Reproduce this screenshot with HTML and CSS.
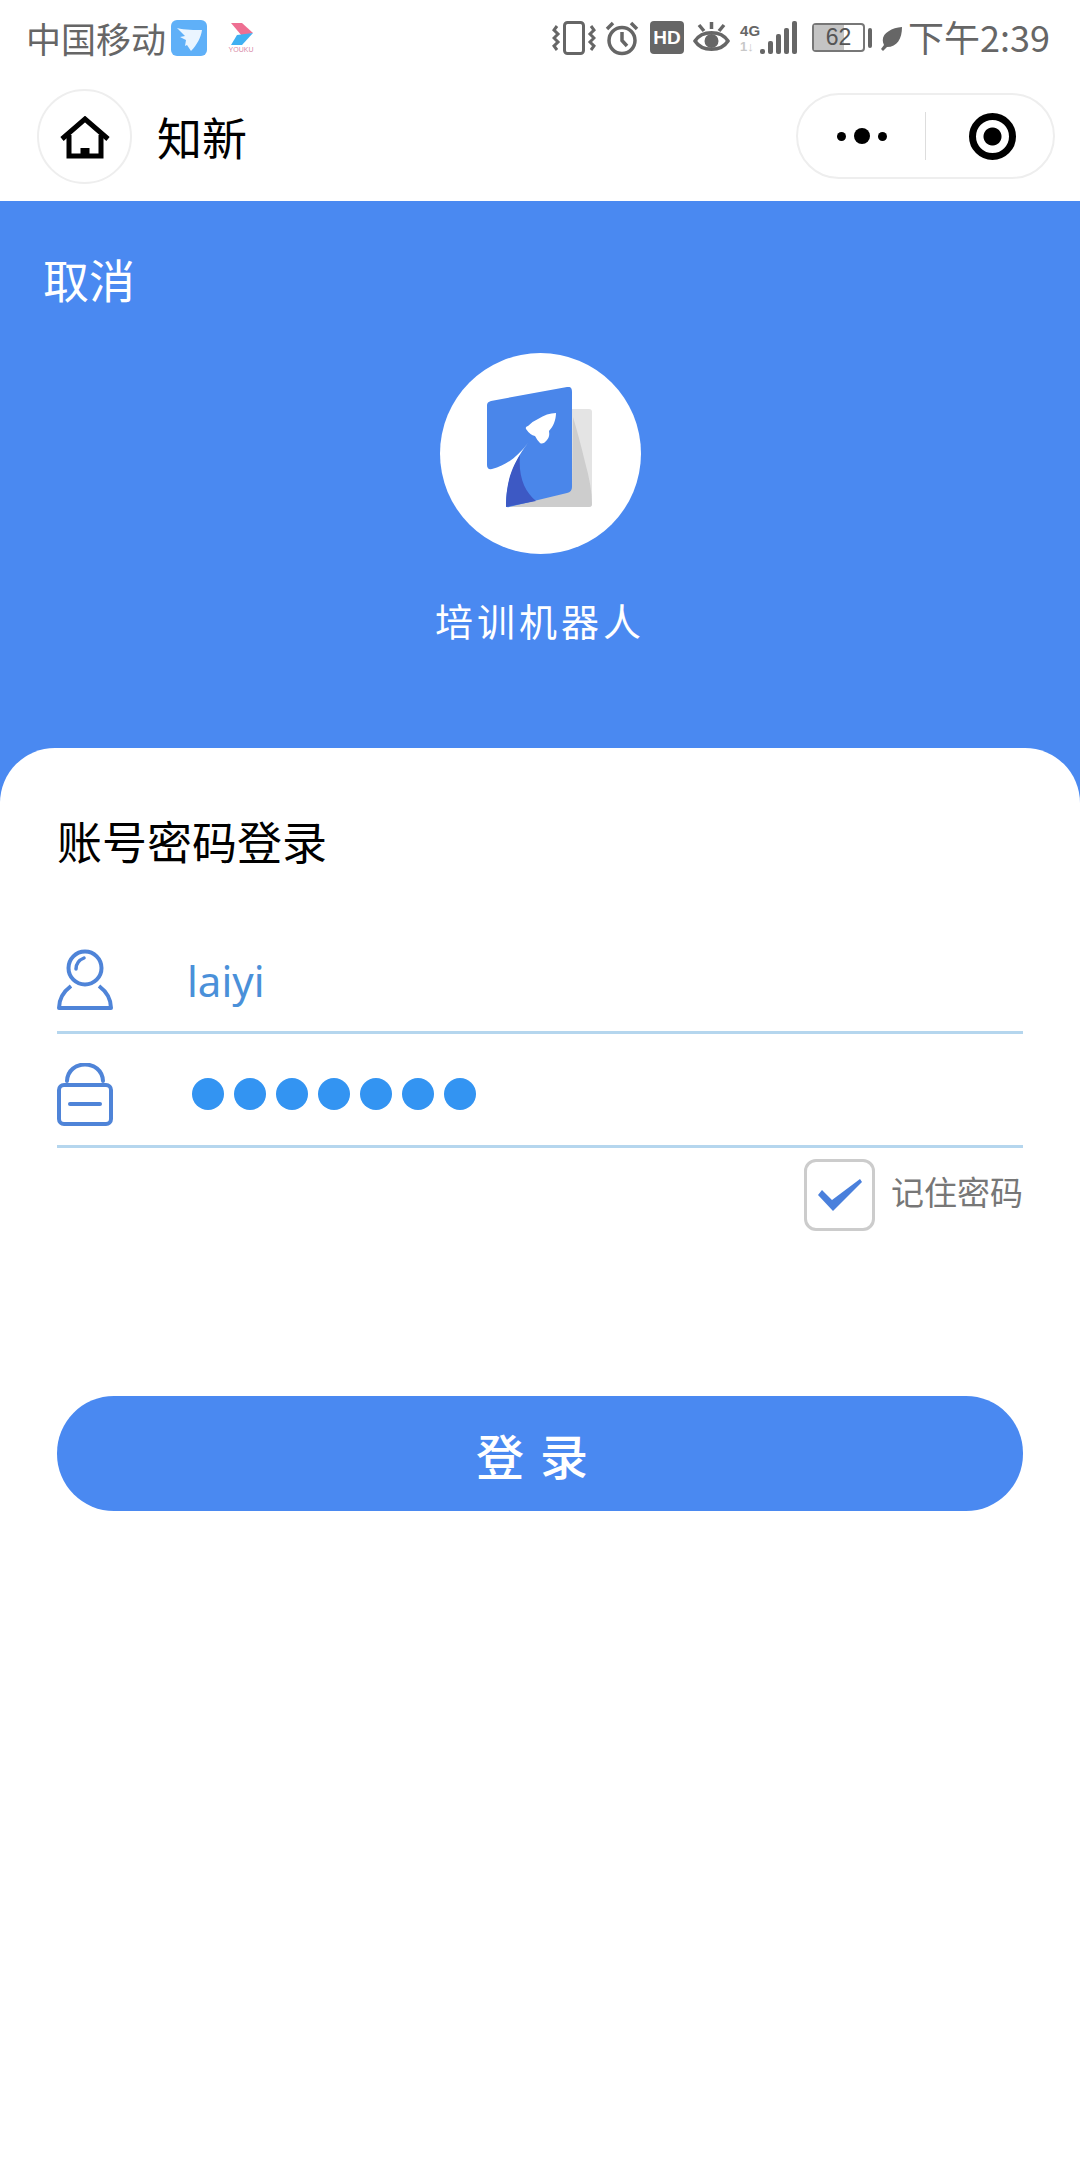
FILE: index.html
```html
<!DOCTYPE html>
<html lang="zh-CN">
<head>
    <meta charset="UTF-8">
    <meta name="viewport" content="width=device-width, initial-scale=1.0">
    <title>知新</title>
    <link rel="stylesheet" href="styles.css">
</head>
<body>
    <!-- Status Bar -->
    <div class="status-bar">
        <div class="status-left">
            <span class="carrier">中国移动</span>
            <svg class="app-icon" width="36" height="36" viewBox="0 0 36 36">
                <rect width="36" height="36" rx="6" fill="#5fb0f8"/>
                <path d="M6 8 C14 10 24 10 31 10 C30 17 26 25 20 31 L16 25 L14 26 L15 20 L9 17 L14 16 Z" fill="#eaf5ff"/>
            </svg>
            <span class="video-app">
                <svg width="26" height="24" viewBox="0 0 26 24">
                    <path d="M3 1 L14 1 L25 11 L14 14 Z" fill="#ee6f92"/>
                    <path d="M25 11 L14 23 L3 23 L9 13 Z" fill="#3fb0f2"/>
                </svg>
                <span class="video-name">YOUKU</span>
            </span>
        </div>
        <div class="status-right">
            <svg class="ico-vibrate" width="44" height="34" viewBox="0 0 44 34" fill="none" stroke="#666">
                <rect x="12.5" y="1.5" width="19" height="31" rx="3" stroke-width="3"/>
                <path d="M5 5 L2 9 L6 13 L2 17 L6 21 L2 25 L5 29" stroke-width="3"/>
                <path d="M39 5 L42 9 L38 13 L42 17 L38 21 L42 25 L39 29" stroke-width="3"/>
            </svg>
            <svg class="ico-alarm" width="34" height="36" viewBox="0 0 34 36" fill="none" stroke="#666" stroke-width="3.5">
                <circle cx="17" cy="20.5" r="13"/>
                <path d="M17 12 L17 20.5 L22 26"/>
                <path d="M2 9 L8 3 M32 9 L26 3"/>
            </svg>
            <span class="hd">HD</span>
            <svg class="ico-eye" width="37" height="34" viewBox="0 0 37 34" fill="none" stroke="#666" stroke-width="3.5">
                <path d="M2 20 C9 9 28 9 35 20 C28 31 9 31 2 20 Z"/>
                <circle cx="18.5" cy="20" r="7" fill="#666" stroke="none"/>
                <path d="M18.5 1 L18.5 8 M6 4 L11 10 M31 4 L26 10"/>
            </svg>
            <span class="signal">
                <span class="net">
                    <span class="net-top">4G</span>
                    <span class="net-bottom">1↓</span>
                </span>
                <span class="bars">
                    <i class="bar bar-1"></i>
                    <i class="bar bar-2"></i>
                    <i class="bar bar-3"></i>
                    <i class="bar bar-4"></i>
                    <i class="bar bar-5"></i>
                </span>
            </span>
            <span class="battery">
                <span class="battery-body"><span class="battery-level" style="width: 62%"></span><span class="battery-num">62</span></span>
                <span class="battery-nub"></span>
            </span>
            <svg class="ico-leaf" width="23" height="26" viewBox="0 0 23 26">
                <path d="M22 2 C22 14 17 22 7 22 L3 26 L1 24 L4 20 C-1 10 10 3 22 2 Z" fill="#666"/>
            </svg>
            <span class="clock">下午2:39</span>
        </div>
    </div>

    <!-- Mini Program Nav -->
    <div class="nav-bar">
        <div class="home-btn">
            <svg width="50" height="44" viewBox="0 0 50 44" fill="none" stroke="#000" stroke-width="5">
                <path d="M2 23 L25 3 L48 23"/>
                <path d="M9 19 L9 40 L41 40 L41 19"/>
                <path d="M25 40 L25 32" stroke-width="9"/>
            </svg>
        </div>
        <div class="nav-title">知新</div>
        <div class="capsule">
            <div class="capsule-more">
                <i class="dot"></i>
                <i class="dot dot-big"></i>
                <i class="dot"></i>
            </div>
            <div class="capsule-line"></div>
            <div class="capsule-close"><i></i></div>
        </div>
    </div>

    <!-- Header -->
    <div class="hero">
        <div class="cancel">取消</div>
        <div class="logo">
            <svg width="106" height="122" viewBox="0 0 106 122">
                <path d="M85 22 L102 22 Q105 22 105 25 L105 117 Q105 120 102 120 L19 120 Z" fill="#e4e4e4"/>
                <path d="M86 30 Q92 50 98 75 Q105 100 105 117 Q105 120 102 120 L19 120 L85 100 Z" fill="#cdcdcd"/>
                <path d="M4 14 L80 0 Q85 -1 85 5 L85 100 Q85 105 80 106 L22 120 Q19 121 19 118 C19 95 28 72 41 56 C30 70 20 78 5 82 Q0 83 0 78 L0 18 Q0 15 4 14 Z" fill="#4a86ea"/>
                <path d="M33 68 C25 80 19 95 19 120 L49 114 C38 105 31 90 33 68 Z" fill="#3d59c4"/>
                <path d="M69 26 C69 33 66 40 62 44 Q63 50 60 53 Q56 58 53 56 Q50 53 48 49 Q43 48 39 42 Q38 40 41 39 Q46 34 51 32 Q60 26 69 26 Z" fill="#fff"/>
            </svg>
        </div>
        <div class="robot-name">培训机器人</div>
    </div>

    <!-- Login Card -->
    <div class="card">
        <h2 class="card-title">账号密码登录</h2>
        <div class="form-row">
            <svg class="row-icon" width="56" height="62" viewBox="0 0 56 62" fill="none" stroke="#4f84d8" stroke-width="4">
                <circle cx="28" cy="19" r="16.5"/>
                <path d="M19 20 C19 15 22 11 27 9" stroke-linecap="round" stroke-width="3.5"/>
                <path d="M14 37 C6 43 2 50 2 59 L54 59 C54 50 50 43 42 37" stroke-linejoin="round"/>
            </svg>
            <span class="username">laiyi</span>
        </div>
        <div class="form-row">
            <svg class="row-icon" width="56" height="63" viewBox="0 0 56 63" fill="none" stroke="#4f84d8" stroke-width="4">
                <path d="M10 18 C11 -4 45 -4 46 18" stroke-linecap="round"/>
                <rect x="2" y="22" width="52" height="39" rx="5"/>
                <path d="M13 41 L43 41" stroke-linecap="round"/>
            </svg>
            <div class="password">
                <i class="pwd-dot"></i>
                <i class="pwd-dot"></i>
                <i class="pwd-dot"></i>
                <i class="pwd-dot"></i>
                <i class="pwd-dot"></i>
                <i class="pwd-dot"></i>
                <i class="pwd-dot"></i>
            </div>
        </div>
        <div class="remember">
            <div class="checkbox">
                <svg width="44" height="32" viewBox="0 0 44 32">
                    <path d="M0 16 L4 11 L14 21 L42 0 L44 3 L15 32 Z" fill="#4a80dc"/>
                </svg>
            </div>
            <span class="remember-text">记住密码</span>
        </div>
        <button type="button" class="login-btn">登录</button>
    </div>
</body>
</html>
```

FILE: styles.css
```css
/* General Styling */
* {
    box-sizing: border-box;
}
body {
    margin: 0;
    padding: 0;
    width: 1080px;
    height: 2160px;
    background: #fff;
    font-family: "Noto Sans CJK SC", "Noto Sans", sans-serif;
    color: #000;
    overflow: hidden;
}
i {
    display: block;
}

/* Status Bar */
.status-bar {
    height: 75px;
    padding: 0 30px 0 26px;
    display: flex;
    justify-content: space-between;
    align-items: center;
    color: #666;
}
.status-left, .status-right {
    display: flex;
    align-items: center;
}
.carrier {
    font-size: 35px;
    line-height: 40px;
    margin-right: 5px;
}
.video-app {
    margin-left: 18px;
    width: 32px;
    display: flex;
    flex-direction: column;
    align-items: center;
}
.video-name {
    font-family: "Liberation Sans", sans-serif;
    font-size: 7px;
    line-height: 8px;
    color: #d88aa8;
}
.ico-vibrate {
    margin-right: 9px;
}
.ico-alarm {
    margin-right: 11px;
}
.hd {
    width: 34px;
    height: 33px;
    margin-right: 9px;
    border-radius: 4px;
    background: #666;
    color: #fff;
    font-family: "Liberation Sans", sans-serif;
    font-size: 19px;
    font-weight: bold;
    line-height: 33px;
    text-align: center;
}
.ico-eye {
    margin-right: 10px;
}
.signal {
    display: flex;
    align-items: flex-end;
    margin-right: 15px;
}
.net {
    display: flex;
    flex-direction: column;
    width: 20px;
    font-family: "Liberation Sans", sans-serif;
    font-weight: bold;
}
.net-top {
    font-size: 15px;
    line-height: 17px;
}
.net-bottom {
    font-size: 13px;
    line-height: 15px;
    color: #c8c8c8;
}
.bars {
    display: flex;
    align-items: flex-end;
    gap: 3px;
}
.bar {
    width: 5px;
    background: #666;
    border-radius: 2px;
}
.bar-1 { height: 5px; }
.bar-2 { height: 13px; }
.bar-3 { height: 20px; }
.bar-4 { height: 26px; }
.bar-5 { height: 33px; }
.battery {
    display: flex;
    align-items: center;
    gap: 3px;
    margin-right: 8px;
}
.battery-body {
    position: relative;
    width: 53px;
    height: 29px;
    border: 2px solid #777;
    border-radius: 4px;
    display: block;
}
.battery-level {
    display: block;
    height: 100%;
    background: #c4c4c4;
}
.battery-num {
    position: absolute;
    inset: 0;
    text-align: center;
    font-family: "Liberation Sans", sans-serif;
    font-size: 23px;
    line-height: 25px;
    color: #555;
}
.battery-nub {
    width: 4px;
    height: 20px;
    border-radius: 2px;
    background: #666;
}
.ico-leaf {
    margin-right: 5px;
}
.clock {
    font-size: 36px;
    line-height: 40px;
    margin-bottom: 3px;
    white-space: nowrap;
}

/* Nav */
.nav-bar {
    height: 126px;
    padding: 0 25px 4px 37px;
    display: flex;
    align-items: center;
}
.home-btn {
    width: 95px;
    height: 95px;
    padding-top: 4px;
    border: 2px solid #eee;
    border-radius: 50%;
    display: flex;
    align-items: center;
    justify-content: center;
}
.nav-title {
    margin-left: 25px;
    margin-top: 2px;
    font-size: 45px;
    line-height: 60px;
}
.capsule {
    margin-left: auto;
    width: 259px;
    height: 86px;
    border: 2px solid #eee;
    border-radius: 43px;
    display: flex;
    align-items: center;
}
.capsule-more {
    width: 127px;
    display: flex;
    align-items: center;
    justify-content: center;
    gap: 8px;
}
.dot {
    width: 9px;
    height: 9px;
    background: #000;
    border-radius: 50%;
}
.dot-big {
    width: 16px;
    height: 16px;
}
.capsule-line {
    width: 1px;
    height: 48px;
    background: #ddd;
}
.capsule-close {
    flex: 1;
    display: flex;
    justify-content: center;
    padding-left: 5px;
}
.capsule-close i {
    width: 47px;
    height: 47px;
    border: 7px solid #000;
    border-radius: 50%;
    background: radial-gradient(circle, #000 0, #000 8.5px, #fff 9.5px);
}

/* Header */
.hero {
    height: 602px;
    background: #4a89f1;
    color: #fff;
    padding-top: 46px;
    display: flex;
    flex-direction: column;
    align-items: center;
}
.cancel {
    align-self: flex-start;
    margin-left: 43px;
    font-size: 46px;
    line-height: 62px;
}
.logo {
    width: 201px;
    height: 201px;
    margin-top: 44px;
    border-radius: 50%;
    background: #fff;
    display: flex;
    align-items: center;
    justify-content: center;
    padding-bottom: 12px;
}
.robot-name {
    margin-top: 41px;
    font-size: 38px;
    line-height: 50px;
    letter-spacing: 4px;
}

/* Login Card */
.card {
    margin-top: -55px;
    height: 1413px;
    padding: 0 57px;
    background: #fff;
    border-radius: 55px 55px 0 0;
    position: relative;
}
.card-title {
    margin: 0;
    padding-top: 62px;
    font-size: 45px;
    font-weight: normal;
    line-height: 62px;
}
.form-row {
    height: 114px;
    padding-top: 9px;
    display: flex;
    align-items: center;
    border-bottom: 3px solid #b5d6ee;
}
.card-title + .form-row {
    margin-top: 48px;
}
.row-icon {
    flex-shrink: 0;
}
.username {
    margin-left: 74px;
    font-family: "Noto Sans", sans-serif;
    font-size: 42px;
    color: #4a90d9;
}
.password {
    margin-left: 79px;
    display: flex;
    gap: 10px;
}
.pwd-dot {
    width: 32px;
    height: 32px;
    border-radius: 50%;
    background: #3394f2;
}
.remember {
    margin-top: 11px;
    display: flex;
    justify-content: flex-end;
    align-items: center;
}
.checkbox {
    width: 71px;
    height: 72px;
    border: 3px solid #ccc;
    border-radius: 12px;
    display: flex;
    align-items: center;
    justify-content: center;
}
.remember-text {
    margin-left: 16px;
    margin-bottom: 8px;
    font-size: 33px;
    color: #777;
}
.login-btn {
    display: block;
    width: 100%;
    height: 115px;
    margin-top: 165px;
    border: none;
    border-radius: 57px;
    background: #4a89f1;
    color: #fff;
    font-family: "Noto Sans CJK SC", sans-serif;
    font-size: 48px;
    font-weight: 500;
    letter-spacing: 16px;
}
```
